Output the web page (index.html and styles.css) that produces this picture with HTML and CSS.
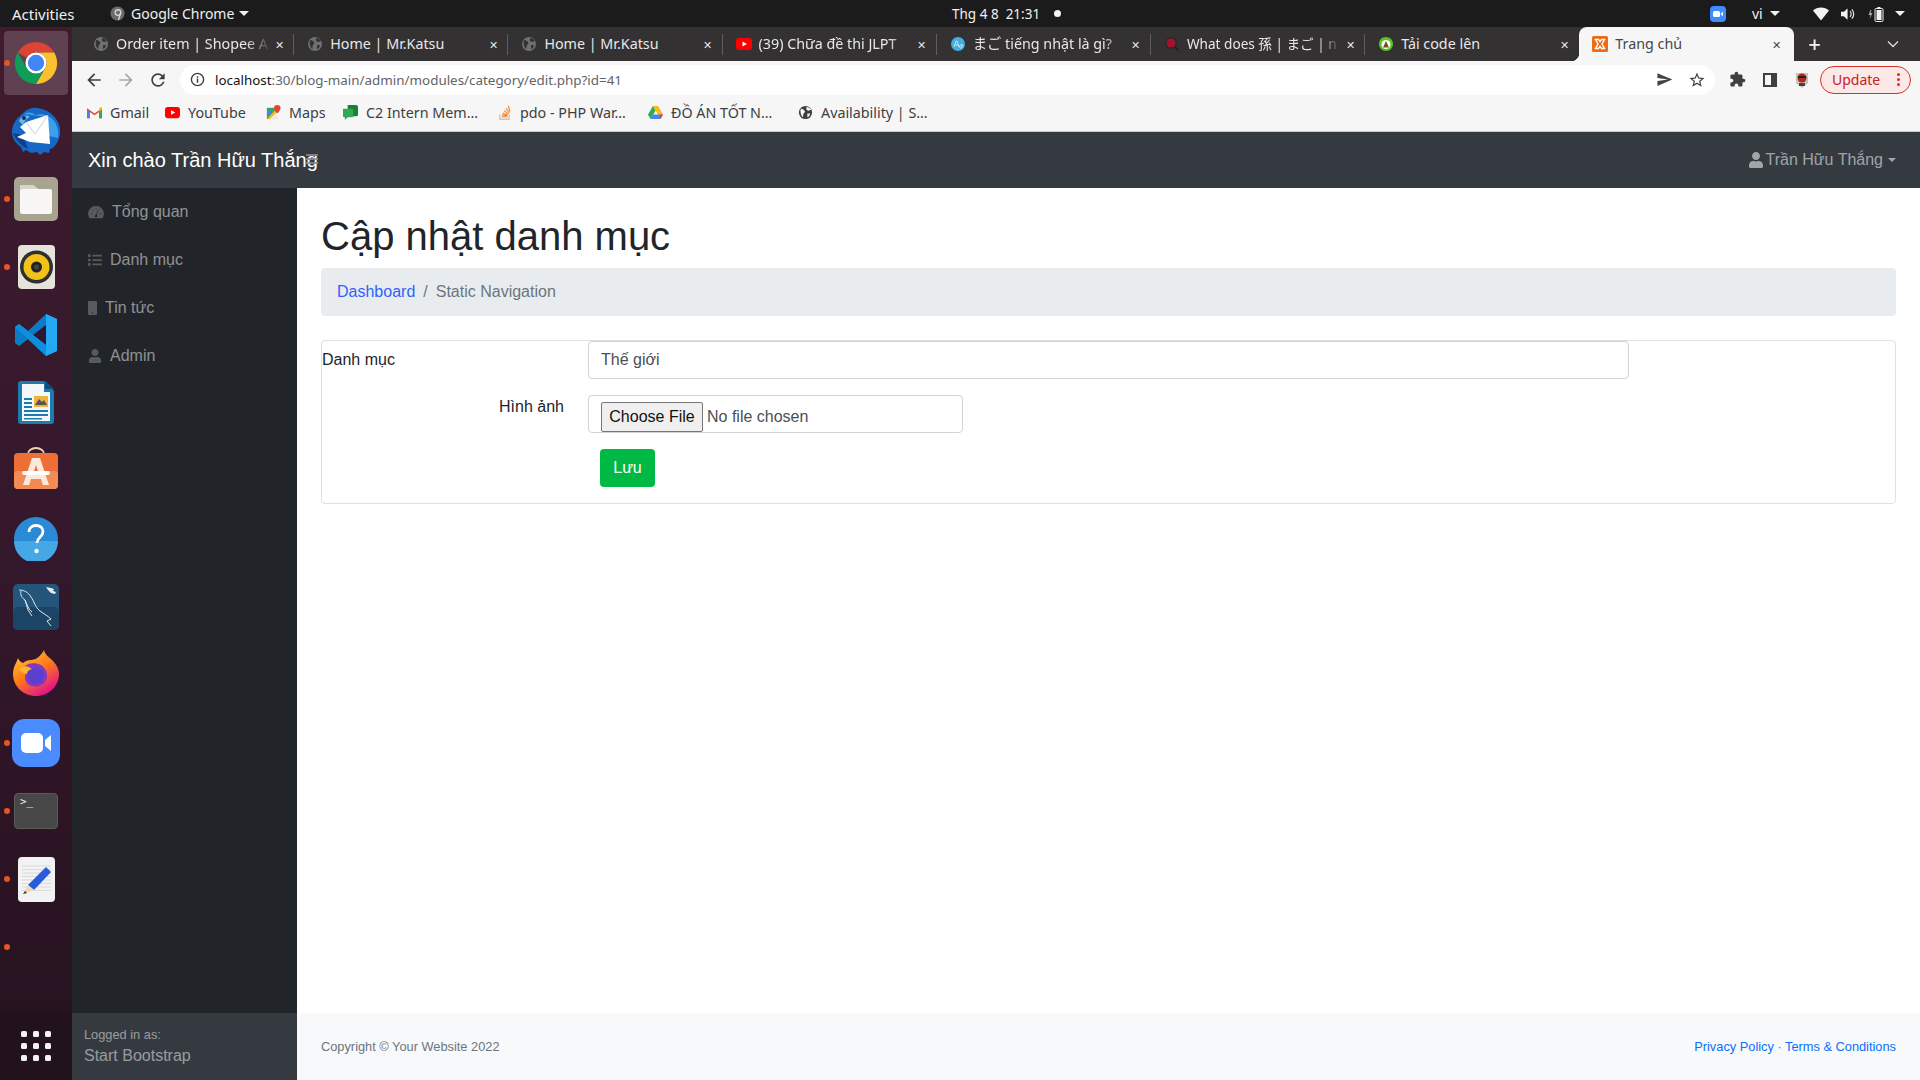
FILE: index.html
```html
<!DOCTYPE html>
<html lang="vi">
<head>
  <meta charset="UTF-8">
  <title>Trang chủ</title>
  <link rel="stylesheet" href="styles.css">
</head>
<body>

<!-- Ubuntu top bar -->
<div class="topbar">
  <div class="top-left">
    <span class="activities">Activities</span>
    <svg class="chrome-mini" viewBox="0 0 16 16"><circle cx="8" cy="8" r="7.5" fill="#6b6b6b"/><circle cx="8.5" cy="7" r="3" fill="none" stroke="#d8d8d8" stroke-width="1.4"/><path d="M11.4 7.5 9 15" stroke="#d8d8d8" stroke-width="1.4"/></svg>
    <span class="app-name">Google Chrome</span>
    <span class="caret-white"></span>
  </div>
  <div class="clock"><span>Thg 4 8&nbsp; 21:31</span><i class="clock-dot"></i></div>
  <div class="top-right">
    <svg class="tray-zoom" viewBox="0 0 16 16"><rect width="16" height="16" rx="4" fill="#3f8cff"/><rect x="3" y="5" width="7" height="6" rx="1.5" fill="#fff"/><path d="M10.8 7.5 13 5.8v4.4l-2.2-1.7z" fill="#fff"/></svg>
    <span class="lang">vi</span>
    <span class="caret-white caret-lang"></span>
    <svg class="tray-wifi" viewBox="0 0 16 14"><path d="M0 3.5C2 1.5 5 .5 8 .5s6 1 8 3L8 13.5z" fill="#f2f2f2"/></svg>
    <svg class="tray-vol" viewBox="0 0 16 14"><path d="M0 4.5h3L7 1v12L3 9.500H0z" fill="#f2f2f2"/><path d="M9.500 4a4 4 0 0 1 0 6M11.500 2a7 7 0 0 1 0 10" fill="none" stroke="#f2f2f2" stroke-width="1.200"/></svg>
    <svg class="tray-bat" viewBox="0 0 16 16"><path d="M2.500 4 .5 9h2l-1 4 3-6h-2l1-3z" fill="#aaa"/><rect x="7" y="2.500" width="8" height="13" rx="1.200" fill="none" stroke="#f2f2f2"/><rect x="9.500" y="1" width="3" height="1.500" fill="#f2f2f2"/><rect x="8.500" y="4" width="5" height="10" fill="#f2f2f2"/></svg>
    <span class="caret-white caret-power"></span>
  </div>
</div>

<div class="desktop">

  <!-- Ubuntu dock -->
  <nav class="dock">
    <div class="dock-item running active">
      <svg class="ico-chrome" viewBox="0 0 48 48">
        <path d="M24 2A22 22 0 0 1 43.050 13H24A11 11 0 0 0 14.470 18.500L4.950 13A22 22 0 0 1 24 2Z" fill="#db4437"/>
        <path d="M43.050 13A22 22 0 0 1 24 46L33.530 29.500A11 11 0 0 0 24 13Z" fill="#fbc02d"/>
        <path d="M4.950 13 14.470 29.500A11 11 0 0 0 33.530 29.500L24 46A22 22 0 0 1 4.950 13Z" fill="#0f9d58"/>
        <circle cx="24" cy="24" r="11" fill="#fff"/><circle cx="24" cy="24" r="8.500" fill="#4285f4"/>
      </svg>
    </div>
    <div class="dock-item">
      <svg class="ico-bird" viewBox="0 0 48 48">
        <path d="M9 8C14 3 19 0 25 1c11 1 21 9 23 20 1 8-2 15-7 20l-3 1-1 4-5-1-4 3-3-3-6 1-5-3-3 2-2-5C3 36 0 31 0 25 0 18 4 12 9 8Z" fill="#1768c4"/>
        <path d="M12 7c4-2 8-2 11 1 8-2 15 0 20 7 3 5 4 11 3 16l-9-2-3-19-14-2z" fill="#3aa0ee"/>
        <path d="M1 26c2 6 7 12 15 16l-5-14z" fill="#0d3f8c"/>
        <path d="M8 20 14 15l22-7 2 29-20-2-13-5 9-4z" fill="#fff"/>
        <path d="M14 15l9 12 13-19" fill="none" stroke="#c9cdd2" stroke-width="1"/>
        <path d="M7 14c2-5 7-7 11-4-3 1-5 3-7 8z" fill="#6fb6ef"/>
        <circle cx="12" cy="11" r="2" fill="#0b2f66"/>
      </svg>
    </div>
    <div class="dock-item running">
      <svg class="ico-files" viewBox="0 0 44 44">
        <rect width="44" height="44" rx="5" fill="#a9a391"/>
        <path d="M6 10a2 2 0 0 1 2-2h11l5 4h12a2 2 0 0 1 2 2v21a2 2 0 0 1-2 2H8a2 2 0 0 1-2-2z" fill="#f8f7f5"/>
        <path d="M6 13V10a2 2 0 0 1 2-2h11l5 4H9z" fill="#d9d5cb"/>
      </svg>
    </div>
    <div class="dock-item running">
      <svg class="ico-rhythm" viewBox="0 0 37 44">
        <rect width="37" height="44" rx="4" fill="#e6e3da"/>
        <circle cx="18.500" cy="22" r="16.500" fill="#2f2f2f"/>
        <circle cx="18.500" cy="22" r="13" fill="#f2c21a"/>
        <circle cx="18.500" cy="22" r="5.500" fill="#222"/>
        <circle cx="18.500" cy="22" r="2.500" fill="#444"/>
      </svg>
    </div>
    <div class="dock-item">
      <svg class="ico-code" viewBox="0 0 42 42">
        <path d="M31 0 42 5v32L31 42 13 25 4 32 0 29v-16l4-3 9 7z" fill="#0a7dc6"/>
        <path d="M31 0 42 5v32L31 42z" fill="#23a9f2"/>
        <path d="M31 11 18 21l13 10z" fill="#2f1433"/>
        <path d="M0 13l4-3 27 21v11L0 13z" fill="#0d8fdc"/>
      </svg>
    </div>
    <div class="dock-item">
      <svg class="ico-writer" viewBox="0 0 36 45">
        <path d="M3 1h23l10 10v30a3 3 0 0 1-3 3H3a3 3 0 0 1-3-3V4a3 3 0 0 1 3-3z" fill="#1c7cb0"/>
        <path d="M4 4h22v8h6v29H4z" fill="#f4f8fa"/>
        <path d="M27 0l9 9h-9z" fill="#0f4f73"/>
        <path d="M6 18h8v2H6zM6 22h8v2H6zM6 26h8v2H6zM6 30h24v2H6zM6 34h24v2H6zM6 38h18v1.500H6z" fill="#1c7cb0"/>
        <rect x="16" y="16" width="14" height="11" fill="#f0b33e"/>
        <path d="M17 25l4-6 3 3 2-2 3 5z" fill="#555"/>
      </svg>
    </div>
    <div class="dock-item">
      <svg class="ico-soft" viewBox="0 0 44 42">
        <path d="M14 7a8 6 0 0 1 16 0" fill="none" stroke="#f3d3ad" stroke-width="1.800"/>
        <rect y="6" width="44" height="36" rx="4" fill="#ee6f35"/>
        <rect y="24" width="44" height="18" rx="4" fill="#f28a55"/>
        <path d="M18 11h8l9 27h-6l-2-6H17l-2 6H9zM19.500 26h5L22 18z" fill="#fde9dc"/>
        <rect x="8" y="24" width="28" height="4" rx="2" fill="#fff"/>
      </svg>
    </div>
    <div class="dock-item">
      <svg class="ico-help" viewBox="0 0 44 44">
        <circle cx="22" cy="22" r="22" fill="#2a8ad6"/>
        <path d="M0 24h44a22 22 0 0 1-44 0z" fill="#45a7e5"/>
        <path d="M15 15c0-4 3-6.500 7-6.500s7 2.500 7 6c0 5.500-6 5.500-6 11.500" fill="none" stroke="#fff" stroke-width="2.800"/>
        <circle cx="22.500" cy="34" r="2.200" fill="#fff"/>
      </svg>
    </div>
    <div class="dock-item">
      <svg class="ico-mysql" viewBox="0 0 46 46">
        <rect width="46" height="46" rx="5" fill="#24557a"/>
        <rect y="23" width="46" height="23" rx="5" fill="#1c4565"/>
        <path d="M6 6c5 0 9 2 12 7 3 4 4 10 9 14 4 3 8 5 11 8l-4 2 4 5M8 7c-1 4 1 7 4 9l3 10 4 6M12 16c2 4 3 9 7 12" fill="none" stroke="#dfe9f0" stroke-width="1"/>
        <path d="M33 3l2 3 3 3 4 1 1-2-3-1 1-2-3-1z" fill="#e6edf2"/>
      </svg>
    </div>
    <div class="dock-item">
      <svg class="ico-fox" viewBox="0 0 46 46">
        <defs>
          <linearGradient id="foxGrad" x1="0" y1="0" x2="0.600" y2="1"><stop offset="0" stop-color="#ffcf3a"/><stop offset="0.550" stop-color="#ff7a18"/><stop offset="1" stop-color="#e31587"/></linearGradient>
        </defs>
        <path d="M31 0c1 5 5 7 9 11 4 4 6 9 6 13 0 12-10 22-23 22C10 46 0 36 0 24c0-4 1-8 3-11l2-5c1 3 3 4 5 5 2-2 5-3 8-3 5 0 10-4 13-10z" fill="url(#foxGrad)"/>
        <path d="M8 21c3-3 6-2 10-2-1-2-3-3-6-3 3-3 10-4 16-1 6 4 8 11 4 17-4 5-12 6-17 2-3-3-4-7-2-11-2 1-3 0-5-2z" fill="#7d3bc4"/>
        <circle cx="23" cy="26" r="8" fill="#5b3fd0"/>
        <path d="M6 19c4-3 9-2 13 0-4 1-5 3-5 5-3 0-6-2-8-5z" fill="#ffb52e"/>
      </svg>
    </div>
    <div class="dock-item running">
      <svg class="ico-zoom" viewBox="0 0 48 48">
        <rect width="48" height="48" rx="12" fill="#4a8cff"/>
        <rect x="9" y="14" width="22" height="20" rx="5" fill="#fff"/>
        <path d="M33 21l6-5v16l-6-5z" fill="#fff"/>
      </svg>
    </div>
    <div class="dock-item running">
      <div class="ico-term"><span class="term-prompt">&gt;_</span></div>
    </div>
    <div class="dock-item running">
      <svg class="ico-edit" viewBox="0 0 37 45">
        <rect width="37" height="45" rx="4" fill="#f2f2f2"/>
        <path d="M4 9h29M4 12.500h29M4 16h29M4 19.500h29M4 23h29M4 26.500h29M4 30h29M4 33.500h29" stroke="#d4d4d4" stroke-width="0.800"/>
        <path d="M28 10l5 5-17 18-6-5z" fill="#2a5bd8"/>
        <path d="M10 28l6 5-11 4z" fill="#f6d6b0"/>
        <path d="M5 37l2-3 2 2z" fill="#333"/>
      </svg>
    </div>
    <div class="dock-item running"></div>
    <div class="dock-apps">
      <div class="apps-grid">
        <i></i><i></i><i></i><i></i><i></i><i></i><i></i><i></i><i></i>
      </div>
    </div>
  </nav>

  <div class="window">

    <!-- Chrome tabs -->
    <div class="tabstrip">
      <div class="tab">
        <svg class="favicon" viewBox="0 0 16 16"><use href="#globe"/></svg>
        <span class="tab-title fade">Order item | Shopee A</span>
        <span class="tab-close">✕</span>
      </div>
      <div class="tab">
        <svg class="favicon" viewBox="0 0 16 16"><use href="#globe"/></svg>
        <span class="tab-title">Home | Mr.Katsu</span>
        <span class="tab-close">✕</span>
      </div>
      <div class="tab">
        <svg class="favicon" viewBox="0 0 16 16"><use href="#globe"/></svg>
        <span class="tab-title">Home | Mr.Katsu</span>
        <span class="tab-close">✕</span>
      </div>
      <div class="tab">
        <svg class="favicon" viewBox="0 0 16 12"><rect width="16" height="12" rx="3" fill="#f00"/><path d="M6.500 3.500 11 6l-4.500 2.500z" fill="#fff"/></svg>
        <span class="tab-title fade">(39) Chữa đề thi JLPT</span>
        <span class="tab-close">✕</span>
      </div>
      <div class="tab">
        <svg class="favicon" viewBox="0 0 16 16"><circle cx="8" cy="8" r="7" fill="#45aee0"/><path d="M4 11 6 5h1l2 6M5 9h3M12 8v3M12 9.500a1.500 1.500 0 1 1-.1-.1" fill="none" stroke="#dff2fb" stroke-width="0.800"/></svg>
        <span class="tab-title fade">まご tiếng nhật là gì?</span>
        <span class="tab-close">✕</span>
      </div>
      <div class="tab">
        <svg class="favicon" viewBox="0 0 16 16"><circle cx="7" cy="7" r="6" fill="#2a2a2a"/><circle cx="7" cy="7" r="4.500" fill="#a5112b"/><path d="M11 11l4 4" stroke="#222" stroke-width="1.600"/></svg>
        <span class="tab-title fade tight">What does 孫 | まご | n</span>
        <span class="tab-close">✕</span>
      </div>
      <div class="tab tab-last">
        <svg class="favicon" viewBox="0 0 16 16"><path d="M8 1c4 0 7 3 7 7s-3 7-7 7-7-3-7-7c0-3 2-6 4-6.500L8 1z" fill="#58c322"/><circle cx="8" cy="8.500" r="4.500" fill="#fff"/><path d="M8 5l3 6.500H5z" fill="#7a4a1e"/></svg>
        <span class="tab-title">Tải code lên</span>
        <span class="tab-close">✕</span>
      </div>
      <div class="tab tab-active">
        <svg class="favicon" viewBox="0 0 16 16"><rect width="16" height="16" rx="1.500" fill="#ef6c15"/><path d="M3.500 3.500h3L8 5.500l1.500-2h3l-2.500 4.500 2.500 4.500h-3L8 10.500l-1.500 2h-3L6 8z" fill="none" stroke="#fff" stroke-width="1.400"/></svg>
        <span class="tab-title">Trang chủ</span>
        <span class="tab-close">✕</span>
      </div>
      <div class="new-tab">+</div>
      <svg class="tab-search" viewBox="0 0 12 8"><path d="M1 1.500 6 6.500l5-5" fill="none" stroke="#d8d8d8" stroke-width="1.400"/></svg>
    </div>

    <!-- Chrome toolbar -->
    <div class="toolbar">
      <svg class="tool-btn" viewBox="0 0 24 24"><path d="M20 11H7.830l5.590-5.590L12 4l-8 8 8 8 1.410-1.410L7.830 13H20v-2z" fill="#3c4043"/></svg>
      <svg class="tool-btn" viewBox="0 0 24 24"><path d="M12 4l-1.410 1.410L16.170 11H4v2h12.170l-5.580 5.590L12 20l8-8z" fill="#a8a8a8"/></svg>
      <svg class="tool-btn" viewBox="0 0 24 24"><path d="M17.650 6.350A7.958 7.958 0 0 0 12 4c-4.420 0-7.990 3.580-7.990 8s3.570 8 7.990 8c3.730 0 6.840-2.550 7.730-6h-2.080A5.990 5.990 0 0 1 12 18c-3.310 0-6-2.690-6-6s2.690-6 6-6c1.660 0 3.140.690 4.220 1.780L13 11h7V4l-2.350 2.350z" fill="#3c4043"/></svg>
      <div class="omnibox">
        <svg class="omni-info" viewBox="0 0 16 16"><circle cx="8" cy="8" r="6.500" fill="none" stroke="#3c4043" stroke-width="1.500"/><path d="M7.200 7h1.600v4.500H7.200zM7.200 4.500h1.600V6H7.200z" fill="#3c4043"/></svg>
        <span class="url"><b>localhost</b>:30/blog-main/admin/modules/category/edit.php?id=41</span>
        <svg class="omni-send" viewBox="0 0 24 24"><path d="M2.010 21 23 12 2.010 3 2 10l15 2-15 2z" fill="#444"/></svg>
        <svg class="omni-star" viewBox="0 0 24 24"><path d="M22 9.240l-7.190-.620L12 2 9.190 8.630 2 9.240l5.460 4.730L5.820 21 12 17.270 18.180 21l-1.630-7.030L22 9.240zM12 15.400l-3.760 2.270 1-4.280-3.320-2.880 4.380-.380L12 6.100l1.710 4.040 4.380.380-3.320 2.880 1 4.280L12 15.400z" fill="#3c4043"/></svg>
      </div>
      <div class="tool-right">
        <svg class="ext-puzzle" viewBox="0 0 24 24"><path d="M20.500 11H19V7c0-1.100-.9-2-2-2h-4V3.500C13 2.120 11.880 1 10.500 1S8 2.120 8 3.500V5H4c-1.100 0-1.990.9-1.990 2v3.800H3.500c1.490 0 2.700 1.210 2.700 2.700s-1.210 2.700-2.700 2.700H2V20c0 1.100.9 2 2 2h3.800v-1.500c0-1.490 1.210-2.700 2.700-2.700 1.490 0 2.700 1.210 2.700 2.700V22H17c1.100 0 2-.9 2-2v-4h1.500c1.380 0 2.500-1.120 2.500-2.500S21.880 11 20.500 11z" fill="#3c4043"/></svg>
        <div class="ext-panel"></div>
        <svg class="ext-avatar" viewBox="0 0 16 18"><path d="M2 2h12v10l-6 5-6-5z" fill="#c7c2b8"/><circle cx="8" cy="7" r="4.500" fill="#b3261e"/><path d="M4 5h8v2H4z" fill="#222"/><path d="M5 12h6v3H5z" fill="#444"/></svg>
        <div class="update-btn"><span>Update</span><i class="update-dots"><b></b><b></b><b></b></i></div>
      </div>
    </div>

    <!-- Bookmarks -->
    <div class="bookmarks">
      <div class="bookmark">
        <svg class="bm-icon" viewBox="0 0 16 12"><path d="M0 1.500 8 7l8-5.500V12h-3V5.500L8 9 3 5.500V12H0z" fill="#ea4335"/><path d="M0 2.500V11a1 1 0 0 0 1 1h2V5.500z" fill="#4285f4"/><path d="M13 5.500V12h2a1 1 0 0 0 1-1V2.500z" fill="#34a853"/><path d="M13 1.500V5.500l3-3V1.500a1.200 1.200 0 0 0-2-.8z" fill="#fbbc04"/></svg>
        <span>Gmail</span>
      </div>
      <div class="bookmark">
        <svg class="bm-icon" viewBox="0 0 16 12"><rect width="16" height="12" rx="3" fill="#f00"/><path d="M6.500 3.500 11 6l-4.500 2.500z" fill="#fff"/></svg>
        <span>YouTube</span>
      </div>
      <div class="bookmark">
        <svg class="bm-icon" viewBox="0 0 16 16"><path d="M1 3h9v12H1z" fill="#34a853"/><path d="M1 15 10 5v10z" fill="#fbbc04"/><path d="M1 3l5 5-5 5z" fill="#4285f4"/><path d="M10 15H4l6-6 4 6z" fill="#e8eaed"/><path d="M12 0a3.500 3.500 0 0 1 3.500 3.500C15.500 6 12 9 12 9S8.500 6 8.500 3.500A3.500 3.500 0 0 1 12 0z" fill="#ea4335"/></svg>
        <span>Maps</span>
      </div>
      <div class="bookmark">
        <svg class="bm-icon" viewBox="0 0 16 16"><path d="M5 0h9a2 2 0 0 1 2 2v8a2 2 0 0 1-2 2H5z" fill="#188038"/><path d="M0 4h10a1 1 0 0 1 1 1v7a1 1 0 0 1-1 1H5l-3 3v-3H1a1 1 0 0 1-1-1z" fill="#34a853"/></svg>
        <span>C2 Intern Mem…</span>
      </div>
      <div class="bookmark">
        <svg class="bm-icon" viewBox="0 0 16 16"><path d="M3 10v5h10v-5" fill="none" stroke="#bcbbbb" stroke-width="1.200"/><path d="M5 12.500h6M5.300 10.500l5.800 1M6 8.500l5.500 2.500M7.500 6l4.700 3.800M9.500 3.500l3.500 5M12 1l1.800 6" fill="none" stroke="#f48024" stroke-width="1.200"/></svg>
        <span>pdo - PHP War…</span>
      </div>
      <div class="bookmark">
        <svg class="bm-icon" viewBox="0 0 16 14"><path d="M5.300 0h5.400l5.300 9h-5.400z" fill="#fbbc04"/><path d="M5.300 0 0 9l2.700 5 5.300-9z" fill="#34a853"/><path d="M2.700 14h10.600l2.700-5H5.300z" fill="#4285f4"/><path d="M13.300 14 16 9h-4z" fill="#ea4335"/></svg>
        <span>ĐỒ ÁN TỐT N…</span>
      </div>
      <div class="bookmark">
        <svg class="bm-icon" viewBox="0 0 16 16"><use href="#globe-dark"/></svg>
        <span>Availability | S…</span>
      </div>
    </div>

    <!-- Admin page -->
    <div class="admin">
      <header class="navbar">
        <a class="brand">Xin chào Trần Hữu Thắng</a>
        <svg class="menu-toggle" viewBox="0 0 12 12"><path d="M0 1h12v2H0zM0 5h12v2H0zM0 9h12v2H0z" fill="#8a8d90" fill-opacity="0.850"/></svg>
        <div class="user-menu">
          <svg class="user-icon" viewBox="0 0 448 512"><use href="#fa-user"/></svg>
          <span>Trần Hữu Thắng</span>
          <i class="caret-nav"></i>
        </div>
      </header>

      <div class="layout">
        <aside class="sidenav">
          <div class="side-menu">
            <a class="side-link">
              <svg class="side-icon ic-16" viewBox="0 0 576 512"><path d="M288 32C128.940 32 0 160.940 0 320c0 52.800 14.250 102.260 39.060 144.800 5.610 9.620 16.300 15.200 27.440 15.200h443c11.140 0 21.830-5.580 27.440-15.200C561.750 422.260 576 372.800 576 320c0-159.060-128.940-288-288-288z" fill="currentColor"/><path d="M288 120v50M160 175l35 35M416 175l-35 35M100 320h50M476 320h-50M300 380l60-170" stroke="#212529" stroke-width="26" fill="none"/><circle cx="288" cy="400" r="46" fill="#212529"/></svg>
              <span>Tổng quan</span>
            </a>
            <a class="side-link">
              <svg class="side-icon ic-14" viewBox="0 0 512 512"><path d="M80 368H16a16 16 0 0 0-16 16v64a16 16 0 0 0 16 16h64a16 16 0 0 0 16-16v-64a16 16 0 0 0-16-16zm0-320H16A16 16 0 0 0 0 64v64a16 16 0 0 0 16 16h64a16 16 0 0 0 16-16V64a16 16 0 0 0-16-16zm0 160H16a16 16 0 0 0-16 16v64a16 16 0 0 0 16 16h64a16 16 0 0 0 16-16v-64a16 16 0 0 0-16-16zm416 176H176a16 16 0 0 0-16 16v32a16 16 0 0 0 16 16h320a16 16 0 0 0 16-16v-32a16 16 0 0 0-16-16zm0-320H176a16 16 0 0 0-16 16v32a16 16 0 0 0 16 16h320a16 16 0 0 0 16-16V80a16 16 0 0 0-16-16zm0 160H176a16 16 0 0 0-16 16v32a16 16 0 0 0 16 16h320a16 16 0 0 0 16-16v-32a16 16 0 0 0-16-16z" fill="currentColor"/></svg>
              <span>Danh mục</span>
            </a>
            <a class="side-link">
              <svg class="side-icon ic-9" viewBox="0 0 9 14"><rect width="9" height="14" rx="1.200" fill="currentColor"/><circle cx="4.500" cy="12" r="0.700" fill="#212529"/></svg>
              <span>Tin tức</span>
            </a>
            <a class="side-link">
              <svg class="side-icon ic-14" viewBox="0 0 448 512"><use href="#fa-user"/></svg>
              <span>Admin</span>
            </a>
          </div>
          <div class="side-footer">
            <div class="small">Logged in as:</div>
            <div>Start Bootstrap</div>
          </div>
        </aside>

        <div class="content">
          <main class="main">
            <h1>Cập nhật danh mục</h1>
            <ol class="breadcrumb">
              <li><a href="#">Dashboard</a></li>
              <li class="crumb-sep">/</li>
              <li class="crumb-active">Static Navigation</li>
            </ol>
            <form class="card">
              <div class="form-row row-name">
                <label class="label-left">Danh mục</label>
                <input class="form-control input-wide" type="text" value="Thế giới">
              </div>
              <div class="form-row row-image">
                <label class="label-right">Hình ảnh</label>
                <div class="form-control input-file">
                  <span class="file-btn">Choose File</span>
                  <span>No file chosen</span>
                </div>
              </div>
              <div class="form-row row-save">
                <button class="btn-save" type="button">Lưu</button>
              </div>
            </form>
          </main>
          <footer class="page-footer">
            <span class="copyright">Copyright © Your Website 2022</span>
            <span><a href="#">Privacy Policy</a> · <a href="#">Terms &amp; Conditions</a></span>
          </footer>
        </div>
      </div>
    </div>
  </div>
</div>

<svg class="defs" width="0" height="0">
  <defs>
    <g id="globe"><circle cx="8" cy="8" r="7" fill="#6e7073"/><path d="M3 4c2 0 3 1 4 2s0 2-1 3 0 3-1 4C3 11 2 7 3 4zM9 2c2 0 4 1 5 3l-3 1-2-1zM10 9h3l-1 3-2 1z" fill="#333"/></g>
    <g id="globe-dark"><circle cx="8" cy="8" r="7" fill="#3c4043"/><path d="M3 4c2 0 3 1 4 2s0 2-1 3 0 3-1 4C3 11 2 7 3 4zM9 2c2 0 4 1 5 3l-3 1-2-1zM10 9h3l-1 3-2 1z" fill="#f6f6f6"/></g>
    <path id="fa-user" fill="currentColor" d="M224 256c70.700 0 128-57.300 128-128S294.700 0 224 0 96 57.300 96 128s57.300 128 128 128zm89.600 32h-16.700c-22.200 10.200-46.900 16-72.900 16s-50.600-5.800-72.900-16h-16.700C60.200 288 0 348.200 0 422.400V464c0 26.500 21.500 48 48 48h352c26.500 0 48-21.500 48-48v-41.600c0-74.200-60.200-134.400-134.400-134.400z"/>
  </defs>
</svg>

</body>
</html>
```

FILE: styles.css
```css
* {
  box-sizing: border-box;
}

html, body {
  margin: 0;
  padding: 0;
  height: 1080px;
  overflow: hidden;
}

body {
  font-family: "Liberation Sans", Arial, sans-serif;
  font-size: 16px;
  color: #212529;
  background: #fff;
}

a {
  text-decoration: none;
}

.defs {
  display: block;
  height: 0;
}

/* Ubuntu top bar */
.topbar {
  height: 27px;
  background: #1b1b1b;
  color: #f0f0f0;
  display: grid;
  grid-template-columns: 940px auto 1fr;
  align-items: center;
  font-family: "Noto Sans", sans-serif;
  font-size: 14px;
  padding-left: 12px;
}

.top-left, .top-right, .clock {
  display: flex;
  align-items: center;
}

.activities {
  width: 98px;
  font-size: 15px;
}

.chrome-mini {
  width: 15px;
  height: 15px;
  margin-right: 6px;
}

.app-name {
  width: 108px;
}

.caret-white {
  width: 0;
  height: 0;
  border-left: 5px solid transparent;
  border-right: 5px solid transparent;
  border-top: 5px solid #f0f0f0;
}

.clock {
  font-size: 13.500px;
}

.clock-dot {
  width: 7px;
  height: 7px;
  border-radius: 50%;
  background: #f4f4f4;
  margin-left: 14px;
}

.top-right {
  justify-content: flex-end;
  padding-right: 15px;
}

.tray-zoom {
  width: 16px;
  height: 16px;
  margin-right: 26px;
}

.lang {
  width: 18px;
}

.caret-lang {
  margin-right: 33px;
}

.tray-wifi {
  width: 16px;
  height: 14px;
  margin-right: 12px;
}

.tray-vol {
  width: 15px;
  height: 14px;
  margin-right: 12px;
}

.tray-bat {
  width: 16px;
  height: 16px;
  margin-right: 11px;
}

/* Main desktop */
.desktop {
  display: flex;
  height: 1053px;
}

.dock {
  width: 72px;
  flex-shrink: 0;
  background: linear-gradient(180deg, #401b2e 0%, #35182c 45%, #25121f 100%);
  display: flex;
  flex-direction: column;
  padding-top: 2px;
}

.dock-item {
  height: 68px;
  flex-shrink: 0;
  display: flex;
  align-items: center;
  justify-content: center;
  position: relative;
}

.dock-item.running::before {
  content: "";
  position: absolute;
  left: 4px;
  top: 31px;
  width: 6px;
  height: 6px;
  border-radius: 50%;
  background: #e95420;
  z-index: 1;
}

.dock-item.active::after {
  content: "";
  position: absolute;
  left: 4px;
  top: 2px;
  width: 64px;
  height: 64px;
  border-radius: 4px;
  background: rgba(255, 255, 255, 0.17);
}

.dock-item svg {
  position: relative;
  z-index: 1;
}

.ico-chrome { width: 46px; height: 46px; }
.ico-bird { width: 48px; height: 48px; }
.ico-files { width: 44px; height: 44px; }
.ico-rhythm { width: 37px; height: 44px; }
.ico-code { width: 42px; height: 42px; }
.ico-writer { width: 36px; height: 45px; margin-bottom: 2px; }
.ico-soft { width: 44px; height: 42px; margin-bottom: 6px; }
.ico-help { width: 44px; height: 44px; }
.ico-mysql { width: 46px; height: 46px; }
.ico-fox { width: 46px; height: 46px; margin-bottom: 4px; }
.ico-zoom { width: 48px; height: 48px; }
.ico-edit { width: 37px; height: 45px; }

.ico-term {
  width: 44px;
  height: 36px;
  border-radius: 4px;
  background: #474747;
  border: 1px solid #5a5a5a;
  padding: 1px 0 0 5px;
}

.term-prompt {
  font-family: "DejaVu Sans Mono", monospace;
  font-size: 11px;
  line-height: 14px;
  color: #f2f2f2;
  display: block;
}

.dock-apps {
  margin-top: auto;
  height: 68px;
  background: #21121e;
  display: flex;
  align-items: center;
  justify-content: center;
}

.apps-grid {
  display: grid;
  grid-template-columns: repeat(3, 6px);
  grid-auto-rows: 6px;
  gap: 6px;
}

.apps-grid i {
  background: #f2f2f2;
  border-radius: 1.500px;
}

.window {
  flex: 1;
  min-width: 0;
  display: flex;
  flex-direction: column;
}

/* Chrome tabs */
.tabstrip {
  height: 34px;
  background: #333132;
  display: flex;
  padding-left: 8px;
  font-family: "Noto Sans", sans-serif;
  font-size: 14.300px;
  color: #e8e8e8;
  flex-shrink: 0;
}

.tab {
  width: 214.200px;
  flex-shrink: 0;
  display: flex;
  align-items: center;
  padding: 0 7px 0 13px;
  position: relative;
}

.tab::after {
  content: "";
  position: absolute;
  right: 0;
  top: 7px;
  height: 21px;
  width: 1px;
  background: #5f5d5e;
}

.tab-last::after,
.tab-active::after {
  display: none;
}

.favicon {
  width: 16px;
  height: 16px;
  flex-shrink: 0;
  margin-right: 7px;
}

.tab-title {
  flex: 1;
  min-width: 0;
  height: 20px;
  line-height: 20px;
  white-space: nowrap;
  overflow: hidden;
  font-family: "Noto Sans", "Noto Sans CJK JP", sans-serif;
}

.tab-title.fade {
  -webkit-mask-image: linear-gradient(90deg, #000 84%, transparent 100%);
  mask-image: linear-gradient(90deg, #000 84%, transparent 100%);
}

.tab-title.tight {
  font-size: 13.600px;
}

.tab-close {
  width: 16px;
  text-align: center;
  font-size: 11px;
  color: #e4e4e4;
  flex-shrink: 0;
}

.tab-active {
  background: #f6f6f6;
  color: #45474a;
  border-radius: 8px 8px 0 0;
  padding-right: 9px;
}

.tab-active .tab-close {
  color: #45474a;
}

.tab-active::before {
  content: "";
  position: absolute;
  left: -8px;
  bottom: 0;
  width: 8px;
  height: 8px;
  background: radial-gradient(circle at 0 0, transparent 8px, #f6f6f6 8.500px);
}

.new-tab {
  width: 42px;
  text-align: center;
  font-size: 22px;
  line-height: 32px;
  color: #f0f0f0;
  font-weight: 500;
}

.tab-search {
  width: 12px;
  height: 8px;
  align-self: center;
  margin-left: 51px;
}

/* Chrome toolbar */
.toolbar {
  height: 37px;
  background: #f6f6f6;
  display: flex;
  align-items: center;
  padding-left: 12px;
  flex-shrink: 0;
}

.tool-btn {
  width: 20px;
  height: 20px;
  margin-right: 12px;
}

.omnibox {
  width: 1535px;
  height: 30px;
  margin-left: 0;
  background: #fff;
  border-radius: 15px;
  display: flex;
  align-items: center;
  padding: 0 9px 0 10px;
}

.omni-info {
  width: 15px;
  height: 15px;
  margin-right: 10px;
}

.url {
  flex: 1;
  font-family: "Noto Sans", sans-serif;
  font-size: 13.400px;
  color: #5f6368;
}

.url b {
  font-weight: 400;
  color: #111;
}

.omni-send {
  width: 17px;
  height: 17px;
  margin-right: 15px;
}

.omni-star {
  width: 18px;
  height: 18px;
}

.tool-right {
  display: flex;
  align-items: center;
  margin-left: 14px;
}

.ext-puzzle {
  width: 17px;
  height: 17px;
  margin-right: 17px;
}

.ext-panel {
  width: 14px;
  height: 14px;
  border: 2px solid #3c4043;
  border-right-width: 6px;
  margin-right: 17px;
}

.ext-avatar {
  width: 16px;
  height: 18px;
  margin-right: 10px;
}

.update-btn {
  width: 91px;
  height: 28px;
  border: 1px solid #d93025;
  border-radius: 14px;
  background: #fce8e6;
  color: #c5221f;
  font-family: "Noto Sans", sans-serif;
  font-size: 14px;
  display: flex;
  align-items: center;
  padding: 0 10px 0 11px;
  justify-content: space-between;
}

.update-dots {
  display: flex;
  flex-direction: column;
  gap: 2px;
}

.update-dots b {
  width: 3px;
  height: 3px;
  border-radius: 50%;
  background: #d93025;
}

/* Bookmarks */
.bookmarks {
  height: 33px;
  background: #f6f6f6;
  display: grid;
  grid-template-columns: 78px 101px 77px 154px 151px 150px auto;
  align-items: center;
  padding-left: 15px;
  padding-bottom: 4px;
  font-family: "Noto Sans", sans-serif;
  font-size: 14.300px;
  color: #3c4043;
  flex-shrink: 0;
}

.bookmark {
  display: flex;
  align-items: center;
  white-space: nowrap;
}

.bm-icon {
  width: 15px;
  height: 15px;
  margin-right: 8px;
  flex-shrink: 0;
}

/* Admin page */
.admin {
  flex: 1;
  min-height: 0;
  display: flex;
  flex-direction: column;
  border-top: 1px solid #c9cbcd;
}

.navbar {
  height: 56px;
  background: #343a40;
  display: flex;
  align-items: center;
  padding: 0 24px 0 16px;
  position: relative;
  flex-shrink: 0;
}

.brand {
  color: #fff;
  font-size: 20px;
}

.menu-toggle {
  position: absolute;
  left: 234px;
  top: 21px;
  width: 12px;
  height: 12px;
}

.user-menu {
  margin-left: auto;
  display: flex;
  align-items: center;
  color: rgba(255, 255, 255, 0.55);
}

.user-icon {
  width: 14px;
  height: 16px;
  margin-right: 3px;
}

.caret-nav {
  width: 0;
  height: 0;
  margin-left: 5px;
  border-left: 4.800px solid transparent;
  border-right: 4.800px solid transparent;
  border-top: 4.800px solid rgba(255, 255, 255, 0.55);
}

.layout {
  flex: 1;
  min-height: 0;
  display: flex;
}

.sidenav {
  width: 225px;
  flex-shrink: 0;
  background: #212529;
  color: rgba(255, 255, 255, 0.5);
  display: flex;
  flex-direction: column;
}

.side-menu {
  flex: 1;
}

.side-link {
  height: 48px;
  padding-left: 16px;
  display: flex;
  align-items: center;
  color: rgba(255, 255, 255, 0.5);
}

.side-icon {
  height: 14px;
  margin-right: 8px;
  color: rgba(255, 255, 255, 0.25);
}

.ic-16 { width: 16px; }
.ic-14 { width: 14px; }
.ic-9 { width: 9px; }

.side-footer {
  height: 67px;
  background: #343a40;
  padding: 12px 12px 0;
  line-height: 24px;
}

.side-footer .small {
  font-size: 12.800px;
  line-height: 19px;
}

.content {
  flex: 1;
  min-width: 0;
  display: flex;
  flex-direction: column;
}

.main {
  flex: 1;
  padding: 0 24px;
}

h1 {
  font-size: 40px;
  font-weight: 500;
  line-height: 48px;
  margin: 24px 0 8px;
}

.breadcrumb {
  list-style: none;
  margin: 0 0 24px;
  padding: 0 16px;
  height: 48px;
  background: #e9ecef;
  border-radius: 4px;
  display: flex;
  align-items: center;
}

.breadcrumb a {
  color: #2f62fb;
}

.crumb-sep {
  color: #6c757d;
  padding: 0 8px;
}

.crumb-active {
  color: #6c757d;
}

.card {
  height: 164px;
  border: 1px solid #dfe0e1;
  border-radius: 4px;
}

.form-row {
  display: flex;
}

.label-left,
.label-right {
  width: 266px;
  flex-shrink: 0;
}

.label-left {
  padding-top: 7px;
  line-height: 24px;
}

.label-right {
  text-align: right;
  padding-right: 24px;
  padding-top: 0;
  line-height: 24px;
}

.form-control {
  border: 1px solid #ced4da;
  border-radius: 4px;
  background: #fff;
  font: inherit;
  color: #495057;
}

.input-wide {
  width: 1041px;
  height: 38px;
  padding: 6px 12px;
}

.row-image {
  margin-top: 16px;
}

.input-file {
  width: 375px;
  height: 38px;
  display: flex;
  align-items: flex-start;
  padding: 6px 0 0 12px;
  color: #495057;
}

.file-btn {
  height: 30px;
  line-height: 28px;
  width: 102px;
  text-align: center;
  background: #efefef;
  border: 1px solid #767676;
  border-radius: 2px;
  color: #111;
  margin-right: 4px;
  flex-shrink: 0;
}

.input-file span:last-child {
  line-height: 30px;
}

.row-save {
  margin-top: 16px;
  padding-left: 278px;
}

.btn-save {
  width: 55px;
  height: 38px;
  border: none;
  border-radius: 4px;
  background: #00b944;
  color: #fff;
  font: inherit;
}

.page-footer {
  height: 67px;
  background: #f8f9fa;
  padding: 0 24px;
  display: flex;
  align-items: center;
  justify-content: space-between;
  font-size: 12.800px;
  color: #6c757d;
}

.page-footer a {
  color: #0d6efd;
}
```
